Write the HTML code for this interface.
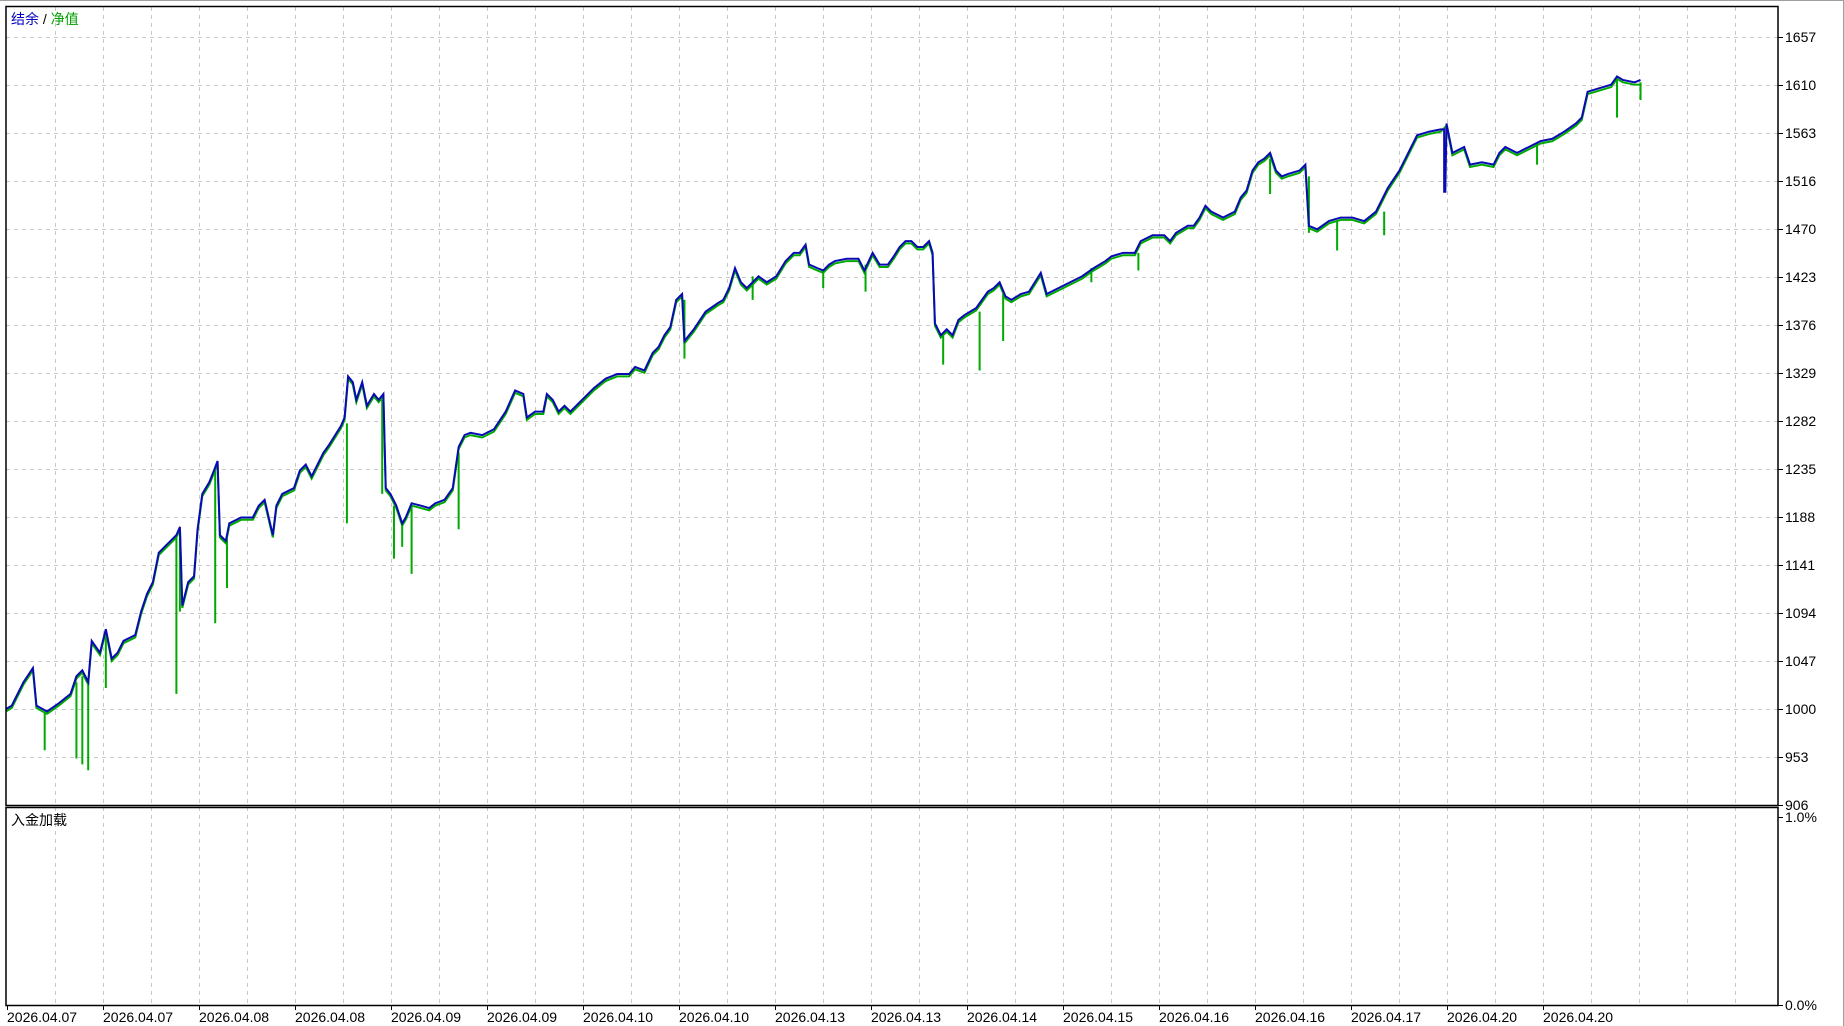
<!DOCTYPE html>
<html><head><meta charset="utf-8"><style>
html,body{margin:0;padding:0;background:#fff;width:1844px;height:1026px;overflow:hidden}
svg{display:block}
text{font-family:"Liberation Sans","Noto Sans CJK SC",sans-serif;font-size:14px;fill:#000}
</style></head><body>
<svg width="1844" height="1026" xmlns="http://www.w3.org/2000/svg">
<rect x="0" y="0" width="1844" height="1026" fill="#fff"/>
<line x1="0" y1="0.5" x2="1844" y2="0.5" stroke="#a0a0a0"/>
<line x1="1843.5" y1="0" x2="1843.5" y2="1026" stroke="#a0a0a0"/>
<g stroke="#c8c8c8" stroke-width="1" stroke-dasharray="4,4" fill="none">
<path d="M55.5 7V1005M103.5 7V1005M151.5 7V1005M199.5 7V1005M247.5 7V1005M295.5 7V1005M343.5 7V1005M391.5 7V1005M439.5 7V1005M487.5 7V1005M535.5 7V1005M583.5 7V1005M631.5 7V1005M679.5 7V1005M727.5 7V1005M775.5 7V1005M823.5 7V1005M871.5 7V1005M919.5 7V1005M967.5 7V1005M1015.5 7V1005M1063.5 7V1005M1111.5 7V1005M1159.5 7V1005M1207.5 7V1005M1255.5 7V1005M1303.5 7V1005M1351.5 7V1005M1399.5 7V1005M1447.5 7V1005M1495.5 7V1005M1543.5 7V1005M1591.5 7V1005M1639.5 7V1005M1687.5 7V1005M1735.5 7V1005"/>
<path d="M6 37.5H1778M6 85.5H1778M6 133.5H1778M6 181.5H1778M6 229.5H1778M6 277.5H1778M6 325.5H1778M6 373.5H1778M6 421.5H1778M6 469.5H1778M6 517.5H1778M6 565.5H1778M6 613.5H1778M6 661.5H1778M6 709.5H1778M6 757.5H1778"/>
</g>
<g transform="scale(1.17602)" fill="none" stroke-width="2" vector-effect="non-scaling-stroke">
<g stroke="#00aa00">
<path vector-effect="non-scaling-stroke" d="M38 605V638M65 580V645M70 575V650M75 580V655M90 540V585M150 455V590M153 450V520M183 400V530M193 455V500M295 360V445M325 340V420M335 430V475M342 445V465M350 430V488M390 385V450M582 255V305M802 285V310M833 265V315M853 250V290M1080 135V165M1137 188V213M1177 180V200M1307 122V140M1375 68V100M1395 70V85M640 235V255M700 230V245M736 225V248M928 228V240M968 215V230M1113 150V198"/>
</g>
<polyline vector-effect="non-scaling-stroke" stroke="#00aa00" transform="translate(0,2)" points="5,603 10,600 20,580 28,568 31,600 40,605 50,598 60,590 65,575 70,570 75,580 78,545 85,555 90,535 95,560 100,555 105,545 115,540 120,520 125,505 130,495 135,470 140,465 145,460 150,455 153,448 155,515 160,495 165,490 168,450 172,420 178,410 182,400 185,392 187,455 192,460 195,445 205,440 215,440 220,430 225,425 232,455 235,430 240,420 250,415 255,400 260,395 265,405 275,385 280,378 285,370 290,362 293,355 296,320 300,325 303,340 308,325 312,345 318,335 322,340 326,335 328,415 332,420 337,430 342,445 345,440 350,428 358,430 365,432 370,428 378,425 385,415 390,380 395,370 400,368 410,370 420,365 430,350 438,332 445,335 448,355 455,350 462,350 465,335 470,340 475,350 480,345 485,350 495,340 505,330 515,322 525,318 535,318 540,312 548,315 555,300 560,295 565,285 570,278 575,255 580,250 582,290 590,280 600,265 610,258 615,255 620,245 625,228 630,240 635,245 645,235 652,240 660,235 668,222 675,215 680,215 685,208 688,225 695,228 700,230 705,225 710,222 720,220 730,220 735,230 742,215 748,225 755,225 760,218 765,210 770,205 775,205 780,210 785,210 790,205 793,215 795,275 800,285 805,280 810,285 815,272 820,268 825,265 830,262 835,255 840,248 845,245 850,240 855,252 860,255 868,250 875,248 885,232 890,250 900,245 910,240 920,235 930,228 940,222 945,218 955,215 965,215 970,205 980,200 990,200 995,205 1000,198 1010,192 1015,192 1020,185 1025,175 1030,180 1040,185 1050,180 1055,168 1060,162 1065,145 1070,138 1075,135 1080,130 1085,145 1090,150 1095,148 1105,145 1110,140 1113,192 1120,195 1130,188 1140,185 1150,185 1160,188 1170,180 1180,160 1190,145 1195,135 1200,125 1205,115 1215,112 1225,110 1230,105 1235,130 1245,125 1250,140 1260,138 1270,140 1275,130 1280,125 1290,130 1300,125 1310,120 1320,118 1330,112 1340,105 1345,100 1350,78 1360,75 1370,72 1375,65 1380,68 1390,70 1395,70"/>
<polyline vector-effect="non-scaling-stroke" stroke="#0a0ab4" points="5,603 10,600 20,580 28,568 31,600 40,605 50,598 60,590 65,575 70,570 75,580 78,545 85,555 90,535 95,560 100,555 105,545 115,540 120,520 125,505 130,495 135,470 140,465 145,460 150,455 153,448 155,515 160,495 165,490 168,450 172,420 178,410 182,400 185,392 187,455 192,460 195,445 205,440 215,440 220,430 225,425 232,455 235,430 240,420 250,415 255,400 260,395 265,405 275,385 280,378 285,370 290,362 293,355 296,320 300,325 303,340 308,325 312,345 318,335 322,340 326,335 328,415 332,420 337,430 342,445 345,440 350,428 358,430 365,432 370,428 378,425 385,415 390,380 395,370 400,368 410,370 420,365 430,350 438,332 445,335 448,355 455,350 462,350 465,335 470,340 475,350 480,345 485,350 495,340 505,330 515,322 525,318 535,318 540,312 548,315 555,300 560,295 565,285 570,278 575,255 580,250 582,290 590,280 600,265 610,258 615,255 620,245 625,228 630,240 635,245 645,235 652,240 660,235 668,222 675,215 680,215 685,208 688,225 695,228 700,230 705,225 710,222 720,220 730,220 735,230 742,215 748,225 755,225 760,218 765,210 770,205 775,205 780,210 785,210 790,205 793,215 795,275 800,285 805,280 810,285 815,272 820,268 825,265 830,262 835,255 840,248 845,245 850,240 855,252 860,255 868,250 875,248 885,232 890,250 900,245 910,240 920,235 930,228 940,222 945,218 955,215 965,215 970,205 980,200 990,200 995,205 1000,198 1010,192 1015,192 1020,185 1025,175 1030,180 1040,185 1050,180 1055,168 1060,162 1065,145 1070,138 1075,135 1080,130 1085,145 1090,150 1095,148 1105,145 1110,140 1113,192 1120,195 1130,188 1140,185 1150,185 1160,188 1170,180 1180,160 1190,145 1195,135 1200,125 1205,115 1215,112 1225,110 1228,110 1228,163 1229,163 1230,105 1235,130 1245,125 1250,140 1260,138 1270,140 1275,130 1280,125 1290,130 1300,125 1310,120 1320,118 1330,112 1340,105 1345,100 1350,78 1360,75 1370,72 1375,65 1380,68 1390,70 1395,68"/>
</g>
<rect x="6" y="6.5" width="1772" height="799" fill="none" stroke="#000" stroke-width="1.5"/>
<rect x="6" y="807.5" width="1772" height="198" fill="none" stroke="#000" stroke-width="1.5"/>
<g stroke="#000" stroke-width="1">
<path d="M1778 37.5h5M1778 85.5h5M1778 133.5h5M1778 181.5h5M1778 229.5h5M1778 277.5h5M1778 325.5h5M1778 373.5h5M1778 421.5h5M1778 469.5h5M1778 517.5h5M1778 565.5h5M1778 613.5h5M1778 661.5h5M1778 709.5h5M1778 757.5h5M1778 805.5h5M1778 817.5h5M1778 1005.5h5"/>
<path d="M7.5 1005v5M103.5 1005v5M199.5 1005v5M295.5 1005v5M391.5 1005v5M487.5 1005v5M583.5 1005v5M679.5 1005v5M775.5 1005v5M871.5 1005v5M967.5 1005v5M1063.5 1005v5M1159.5 1005v5M1255.5 1005v5M1351.5 1005v5M1447.5 1005v5M1543.5 1005v5"/>
</g>
<g>
<text x="1785" y="42">1657</text><text x="1785" y="90">1610</text><text x="1785" y="138">1563</text><text x="1785" y="186">1516</text><text x="1785" y="234">1470</text><text x="1785" y="282">1423</text><text x="1785" y="330">1376</text><text x="1785" y="378">1329</text><text x="1785" y="426">1282</text><text x="1785" y="474">1235</text><text x="1785" y="522">1188</text><text x="1785" y="570">1141</text><text x="1785" y="618">1094</text><text x="1785" y="666">1047</text><text x="1785" y="714">1000</text><text x="1785" y="762">953</text><text x="1785" y="810">906</text>
<text x="1785" y="822">1.0%</text><text x="1785" y="1010">0.0%</text>
</g>
<g>
<text x="7" y="1022">2026.04.07</text><text x="103" y="1022">2026.04.07</text><text x="199" y="1022">2026.04.08</text><text x="295" y="1022">2026.04.08</text><text x="391" y="1022">2026.04.09</text><text x="487" y="1022">2026.04.09</text><text x="583" y="1022">2026.04.10</text><text x="679" y="1022">2026.04.10</text><text x="775" y="1022">2026.04.13</text><text x="871" y="1022">2026.04.13</text><text x="967" y="1022">2026.04.14</text><text x="1063" y="1022">2026.04.15</text><text x="1159" y="1022">2026.04.16</text><text x="1255" y="1022">2026.04.16</text><text x="1351" y="1022">2026.04.17</text><text x="1447" y="1022">2026.04.20</text><text x="1543" y="1022">2026.04.20</text>
</g>
<text x="11" y="24"><tspan fill="#0000c0">结余</tspan> / <tspan fill="#00a000">净值</tspan></text>
<text x="11" y="825">入金加载</text>
</svg>
</body></html>
